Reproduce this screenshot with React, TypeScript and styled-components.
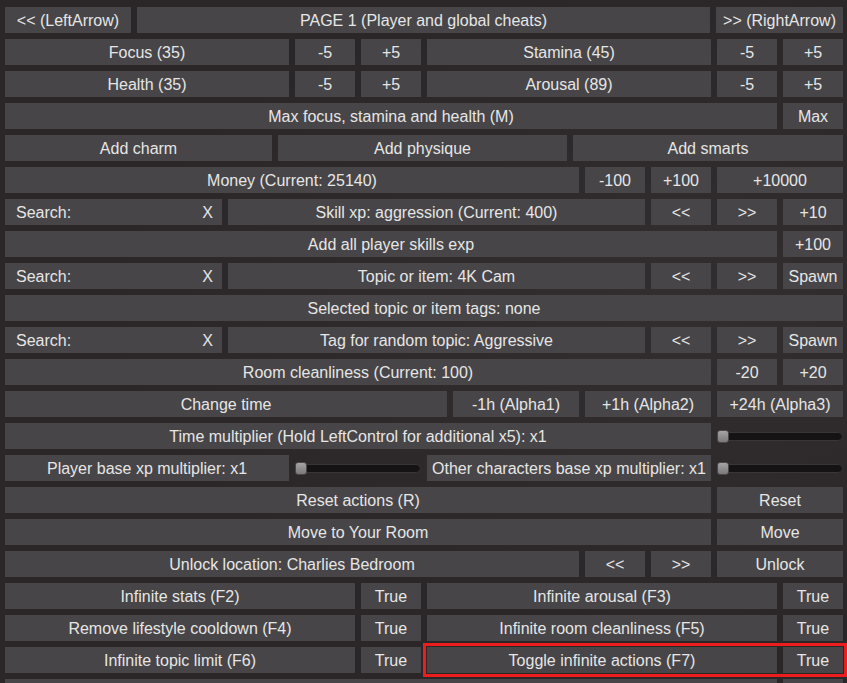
import React from "react";
import styled, { createGlobalStyle } from "styled-components";

const GlobalStyle = createGlobalStyle`
  html, body {
    margin: 0;
    padding: 0;
    background: #2b2627;
    overflow: hidden;
  }
  body {
    font-family: "Liberation Sans", Arial, sans-serif;
  }
`;

const Panel = styled.div`
  display: flex;
  flex-direction: column;
  gap: 6px;
  padding: 7px 4px 0 5px;
  width: 847px;
  height: 683px;
  box-sizing: border-box;
  background: radial-gradient(ellipse at 80% 45%, #322d2e 0%, #2b2627 60%);
`;

const Row = styled.div`
  display: flex;
  gap: 6px;
  height: 26px;
  flex: none;
`;

const Btn = styled.div<{ $w?: number; $left?: boolean }>`
  flex: ${(p) => (p.$w ? `0 0 ${p.$w}px` : "1 1 0")};
  min-width: 0;
  height: 26px;
  box-sizing: border-box;
  background: #474547;
  color: #e6e6e6;
  font-size: 16px;
  line-height: 26px;
  text-align: center;
  white-space: nowrap;
  overflow: hidden;
  display: flex;
  align-items: center;
  justify-content: ${(p) => (p.$left ? "space-between" : "center")};
  padding: ${(p) => (p.$left ? "2px 9px 0 11px" : "2px 0 0")};
`;

const SliderCell = styled.div<{ $w: number }>`
  flex: 0 0 ${(p) => p.$w}px;
  display: flex;
  align-items: center;
`;

const Track = styled.div`
  flex: 1;
  height: 9px;
  border-radius: 5px;
  background: #161314;
  border: 1px solid #3a3637;
  box-sizing: border-box;
  display: flex;
  align-items: center;
`;

const Thumb = styled.div`
  flex: none;
  width: 12px;
  height: 13px;
  margin-left: -1px;
  border-radius: 3px;
  box-sizing: border-box;
  border: 1px solid #4a4849;
  background: linear-gradient(#a5a3a4, #7a7879);
`;

const Highlight = styled.div`
  display: flex;
  gap: 6px;
  flex: 0 0 416px;
  outline: 3px solid #ee1d1d;
  outline-offset: 1px;
`;

const Slider = ({ w }: { w: number }) => (
  <SliderCell $w={w}>
    <Track>
      <Thumb />
    </Track>
  </SliderCell>
);

const Search = () => (
  <Btn $w={217} $left>
    <span>Search:</span>
    <span>X</span>
  </Btn>
);

export default function App() {
  return (
    <>
      <GlobalStyle />
      <Panel>
        <Row>
          <Btn $w={126}>{"<< (LeftArrow)"}</Btn>
          <Btn>PAGE 1 (Player and global cheats)</Btn>
          <Btn $w={127}>{">> (RightArrow)"}</Btn>
        </Row>
        <Row>
          <Btn>Focus (35)</Btn>
          <Btn $w={60}>-5</Btn>
          <Btn $w={60}>+5</Btn>
          <Btn>Stamina (45)</Btn>
          <Btn $w={60}>-5</Btn>
          <Btn $w={60}>+5</Btn>
        </Row>
        <Row>
          <Btn>Health (35)</Btn>
          <Btn $w={60}>-5</Btn>
          <Btn $w={60}>+5</Btn>
          <Btn>Arousal (89)</Btn>
          <Btn $w={60}>-5</Btn>
          <Btn $w={60}>+5</Btn>
        </Row>
        <Row>
          <Btn>Max focus, stamina and health (M)</Btn>
          <Btn $w={60}>Max</Btn>
        </Row>
        <Row>
          <Btn $w={267}>Add charm</Btn>
          <Btn $w={289}>Add physique</Btn>
          <Btn>Add smarts</Btn>
        </Row>
        <Row>
          <Btn>Money (Current: 25140)</Btn>
          <Btn $w={60}>-100</Btn>
          <Btn $w={60}>+100</Btn>
          <Btn $w={126}>+10000</Btn>
        </Row>
        <Row>
          <Search />
          <Btn>Skill xp: aggression (Current: 400)</Btn>
          <Btn $w={60}>{"<<"}</Btn>
          <Btn $w={60}>{">>"}</Btn>
          <Btn $w={60}>+10</Btn>
        </Row>
        <Row>
          <Btn>Add all player skills exp</Btn>
          <Btn $w={60}>+100</Btn>
        </Row>
        <Row>
          <Search />
          <Btn>Topic or item: 4K Cam</Btn>
          <Btn $w={60}>{"<<"}</Btn>
          <Btn $w={60}>{">>"}</Btn>
          <Btn $w={60}>Spawn</Btn>
        </Row>
        <Row>
          <Btn>Selected topic or item tags: none</Btn>
        </Row>
        <Row>
          <Search />
          <Btn>Tag for random topic: Aggressive</Btn>
          <Btn $w={60}>{"<<"}</Btn>
          <Btn $w={60}>{">>"}</Btn>
          <Btn $w={60}>Spawn</Btn>
        </Row>
        <Row>
          <Btn>Room cleanliness (Current: 100)</Btn>
          <Btn $w={60}>-20</Btn>
          <Btn $w={60}>+20</Btn>
        </Row>
        <Row>
          <Btn>Change time</Btn>
          <Btn $w={126}>-1h (Alpha1)</Btn>
          <Btn $w={126}>+1h (Alpha2)</Btn>
          <Btn $w={126}>+24h (Alpha3)</Btn>
        </Row>
        <Row>
          <Btn>Time multiplier (Hold LeftControl for additional x5): x1</Btn>
          <Slider w={126} />
        </Row>
        <Row>
          <Btn>Player base xp multiplier: x1</Btn>
          <Slider w={126} />
          <Btn>Other characters base xp multiplier: x1</Btn>
          <Slider w={126} />
        </Row>
        <Row>
          <Btn>Reset actions (R)</Btn>
          <Btn $w={126}>Reset</Btn>
        </Row>
        <Row>
          <Btn>Move to Your Room</Btn>
          <Btn $w={126}>Move</Btn>
        </Row>
        <Row>
          <Btn>Unlock location: Charlies Bedroom</Btn>
          <Btn $w={60}>{"<<"}</Btn>
          <Btn $w={60}>{">>"}</Btn>
          <Btn $w={126}>Unlock</Btn>
        </Row>
        <Row>
          <Btn>Infinite stats (F2)</Btn>
          <Btn $w={60}>True</Btn>
          <Btn>Infinite arousal (F3)</Btn>
          <Btn $w={60}>True</Btn>
        </Row>
        <Row>
          <Btn>Remove lifestyle cooldown (F4)</Btn>
          <Btn $w={60}>True</Btn>
          <Btn>Infinite room cleanliness (F5)</Btn>
          <Btn $w={60}>True</Btn>
        </Row>
        <Row>
          <Btn>Infinite topic limit (F6)</Btn>
          <Btn $w={60}>True</Btn>
          <Highlight>
            <Btn>Toggle infinite actions (F7)</Btn>
            <Btn $w={60}>True</Btn>
          </Highlight>
        </Row>
        <Row>
          <Btn />
          <Btn $w={60} />
        </Row>
      </Panel>
    </>
  );
}
